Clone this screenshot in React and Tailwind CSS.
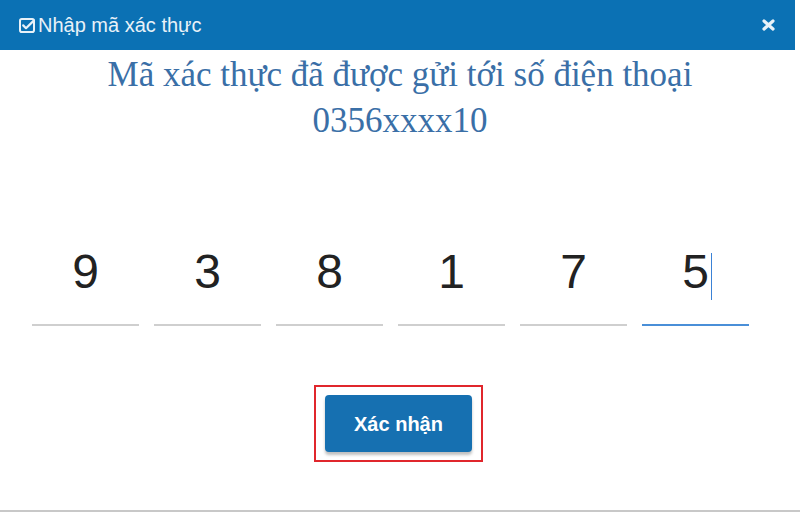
import React from 'react';

const digits = ['9', '3', '8', '1', '7', '5'];

// Square outline with a tick, like the font icon in the title bar
const CheckSquare = () => (
  <svg className="w-[17px] h-[15px]" viewBox="0 0 17 15" fill="none">
    <rect x="1" y="1" width="14" height="13" rx="1.8" stroke="currentColor" strokeWidth="2" />
    <path d="M4.2 7.4l2.8 2.8L14.8 2.6" stroke="currentColor" strokeWidth="2.2" strokeLinecap="round" strokeLinejoin="round" />
  </svg>
);

const CloseIcon = () => (
  <svg className="w-[13px] h-[12px]" viewBox="0 0 13 12" fill="none">
    <path d="M2 2l9 8M11 2l-9 8" stroke="currentColor" strokeWidth="3.2" strokeLinecap="round" />
  </svg>
);

const OtpCell = ({ value, active }) => (
  <div className="w-[107px] flex flex-col items-center">
    <div className="h-[66px] flex items-center justify-center text-[48px] leading-none text-[#222]">
      <span className="relative">
        {value}
        {active && <span className="absolute right-[-3px] top-[5px] w-px h-[47px] bg-[#3b82d6]" />}
      </span>
    </div>
    <div className={active ? 'mt-[19px] w-full h-[2px] bg-[#4a8fd8]' : 'mt-[19px] w-full h-[2px] bg-[#cfcfcf]'} />
  </div>
);

export default function App() {
  return (
    <div className="w-[800px] h-[516px] bg-white flex flex-col" style={{ fontFamily: '"Liberation Sans", Arial, sans-serif' }}>
      <div className="w-[795px] h-[50px] bg-[#0b71b4] flex items-center justify-between pl-[19px] pr-[20px] text-[#e8f1f8]">
        <div className="flex items-center gap-[2px] text-[20px] leading-none">
          <CheckSquare />
          <span>Nhập mã xác thực</span>
        </div>
        <CloseIcon />
      </div>

      <div
        className="mt-[2px] text-center text-[35px] leading-[46px] text-[#3a6fa7]"
        style={{ fontFamily: '"Liberation Serif", "Times New Roman", serif' }}
      >
        <p>Mã xác thực đã được gửi tới số điện thoại</p>
        <p>0356xxxx10</p>
      </div>

      <div className="mt-[95px] pl-[32px] flex gap-[15px]">
        {digits.map((d, i) => (
          <OtpCell key={i} value={d} active={i === digits.length - 1} />
        ))}
      </div>

      <div className="mt-[59px] flex justify-center">
        <div className="ml-[-3px] border-2 border-[#e0262c] px-[9px] py-[8px]">
          <button className="w-[147px] h-[57px] rounded-[4px] bg-[#1670b1] text-white text-[20px] font-bold shadow-[0_3px_3px_rgba(0,0,0,0.25)]">
            Xác nhận
          </button>
        </div>
      </div>

      <div className="mt-auto mb-[4px] h-[2px] bg-[#c8c8c8]" />
    </div>
  );
}
